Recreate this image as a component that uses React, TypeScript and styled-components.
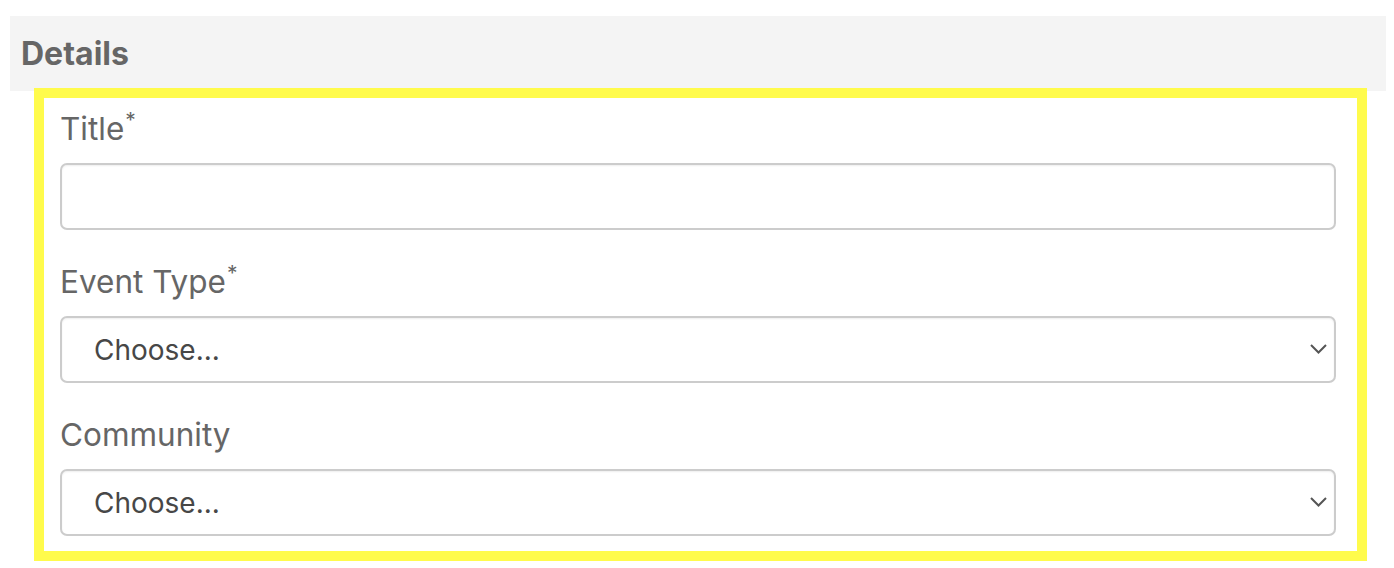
import React from "react";
import styled, { createGlobalStyle } from "styled-components";

const GlobalStyle = createGlobalStyle`
  body {
    margin: 0;
    background: #ffffff;
    font-family: Inter, "Liberation Sans", Arial, sans-serif;
  }
`;

const Page = styled.div`
  padding: 16px 8px 0 10px;
`;

const SectionHeader = styled.div`
  width: 1376px;
  height: 75px;
  box-sizing: border-box;
  background: #f4f4f4;
  padding: 0 11px;
  display: flex;
  align-items: center;
  font-size: 32px;
  font-weight: 700;
  color: #666666;
`;

const Highlight = styled.div`
  margin: -3px 0 0 24px;
  width: 1333px;
  box-sizing: border-box;
  border: 10px solid #fffb4c;
  padding: 11px 21px 15px 16px;
  position: relative;
`;

const Field = styled.div`
  display: flex;
  flex-direction: column;
  & + & {
    margin-top: 32px;
  }
`;

const Label = styled.label`
  font-size: 31.5px;
  line-height: 40px;
  color: #666666;
  margin-bottom: 14px;
`;

const Required = styled.sup`
  font-size: 21px;
  line-height: 0;
  position: relative;
  top: -1px;
  margin-left: 1px;
`;

const TextInput = styled.input`
  height: 67px;
  box-sizing: border-box;
  border: 2px solid #cccccc;
  border-radius: 7px;
  box-shadow: inset 0 1px 2px rgba(0, 0, 0, 0.07);
  font: inherit;
  font-size: 28px;
  padding: 0 32px;
  outline: none;
`;

const SelectWrap = styled.div`
  position: relative;
  height: 67px;
`;

const Select = styled.select`
  appearance: none;
  width: 100%;
  height: 67px;
  box-sizing: border-box;
  border: 2px solid #cccccc;
  border-radius: 7px;
  background: #ffffff;
  box-shadow: inset 0 1px 2px rgba(0, 0, 0, 0.07);
  font-family: inherit;
  font-size: 28px;
  color: #474747;
  padding: 0 32px;
  outline: none;
`;

const Chevron = styled.svg`
  position: absolute;
  right: 9px;
  top: 28px;
  width: 17px;
  height: 10px;
  pointer-events: none;
`;

function ChooseSelect() {
  return (
    <SelectWrap>
      <Select defaultValue="">
        <option value="">Choose...</option>
      </Select>
      <Chevron viewBox="0 0 17 10">
        <path d="M1 1 L8.5 8.5 L16 1" fill="none" stroke="#555" strokeWidth="2" />
      </Chevron>
    </SelectWrap>
  );
}

export default function App() {
  return (
    <Page>
      <GlobalStyle />
      <SectionHeader>Details</SectionHeader>
      <Highlight>
        <Field>
          <Label>
            Title<Required>*</Required>
          </Label>
          <TextInput type="text" />
        </Field>
        <Field>
          <Label>
            Event Type<Required>*</Required>
          </Label>
          <ChooseSelect />
        </Field>
        <Field>
          <Label>Community</Label>
          <ChooseSelect />
        </Field>
      </Highlight>
    </Page>
  );
}
